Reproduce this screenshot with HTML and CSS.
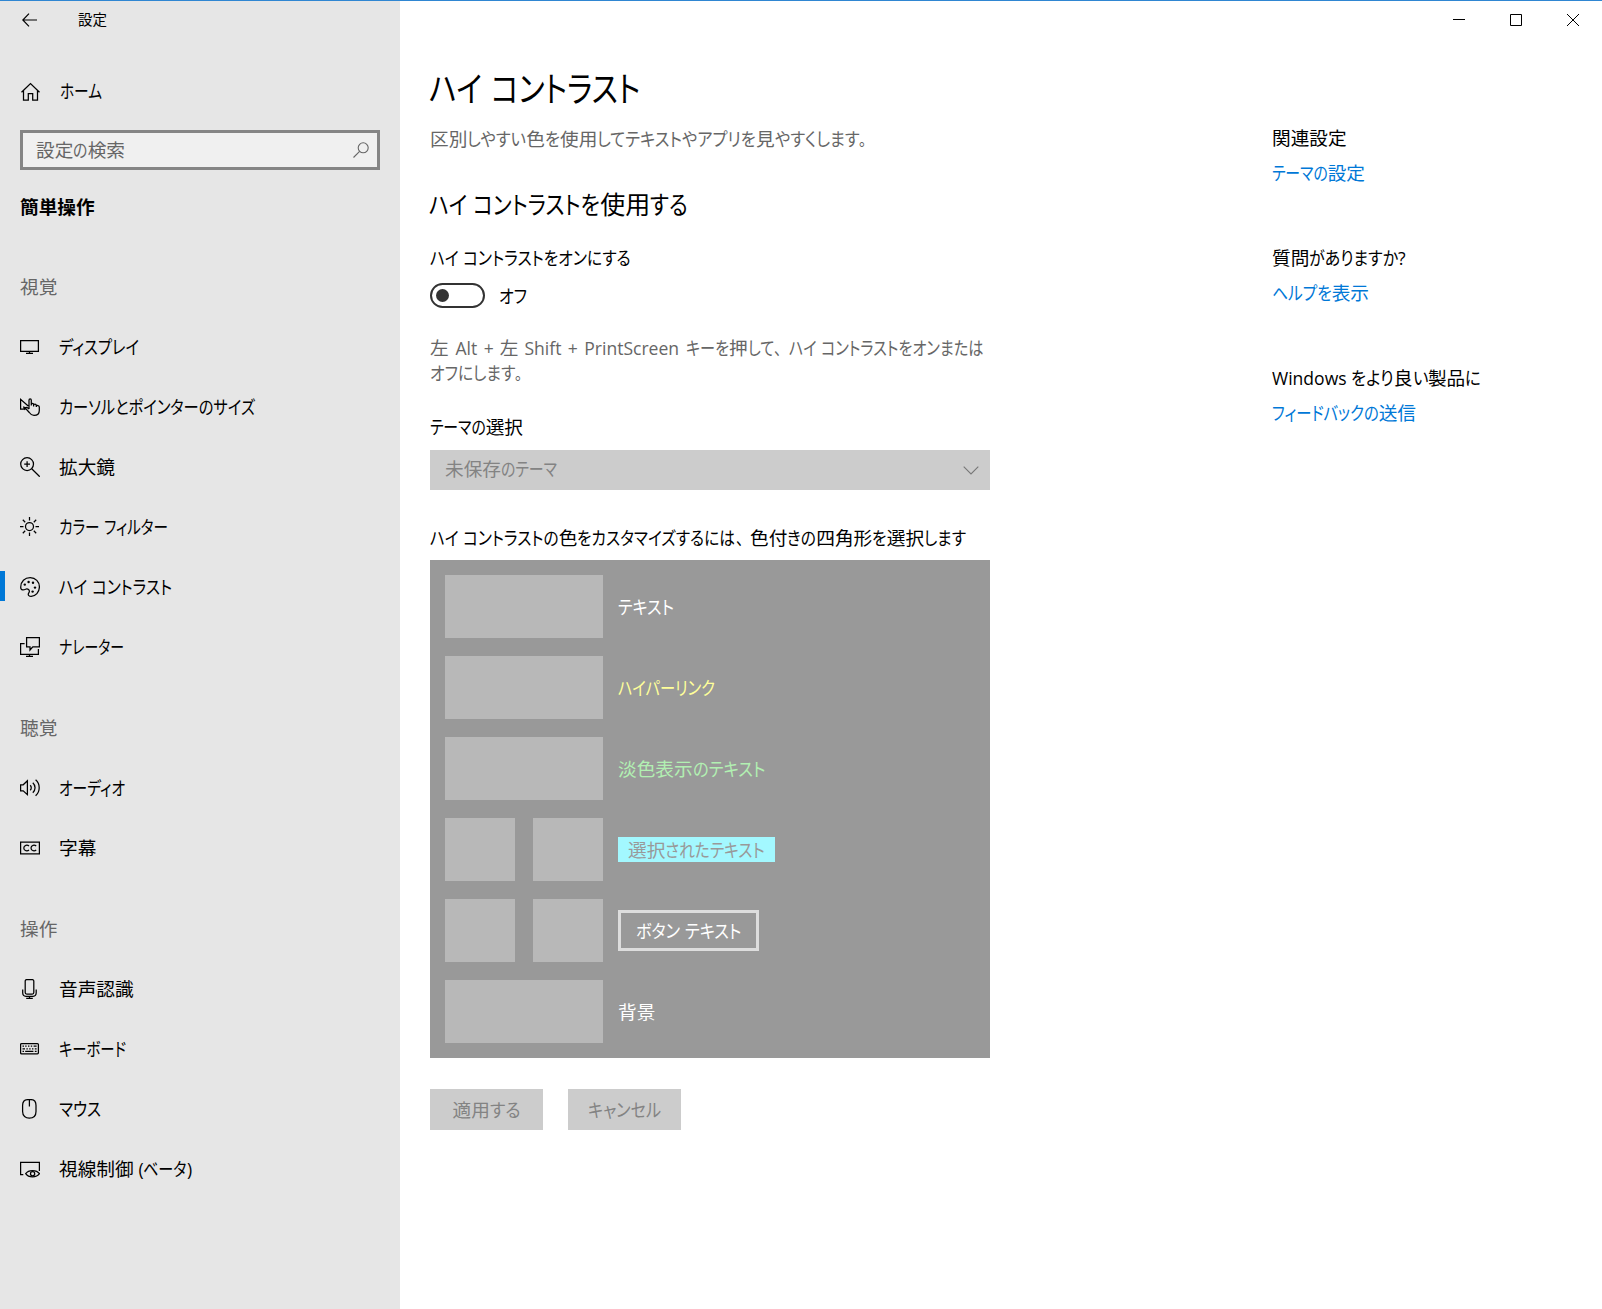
FILE: index.html
```html
<!DOCTYPE html>
<html lang="ja">
<head>
<meta charset="utf-8">
<title>設定</title>
<link rel="stylesheet" href="styles.css">
</head>
<body>
<div class="window">
  <aside class="sidebar">
    <header class="titlebar">
      <svg class="back" viewBox="0 0 16 14"><path d="M.8 7H15M7 .7.8 7 7 13.3"/></svg>
      <span class="apptitle">設定</span>
    </header>
    <a class="home">
      <svg class="icon" viewBox="0 0 20 20"><path d="M1.5 10.2 10.5 1.5 19.5 10.2M3.5 8.5V18H8.3V11.5H12.7V18H17.5V8.5"/></svg>
      <span data-w="42">ホーム</span>
    </a>
    <div class="search">
      <span data-w="89">設定の検索</span>
      <svg viewBox="0 0 16 16"><circle cx="10.2" cy="5.8" r="5"/><path d="M6.6 9.4.5 15.5"/></svg>
    </div>
    <h2 class="category">簡単操作</h2>
    <nav>
      <h3>視覚</h3>
      <a><svg class="icon" viewBox="0 0 20 20"><path d="M.6 3.6H18.4V14.4H.6ZM9.5 14.4V16.4M6 16.4H13"/></svg><span data-w="80">ディスプレイ</span></a>
      <a><svg class="icon" viewBox="0 0 20 20"><path d="M5.3 10.2 3.5 12.2 .6 12.2V2.4L8.2 9M3.5 9.5 5 13M9 12V3.3C9 1.3 11.3 1.3 11.3 3.3V8.5M11.3 7.5C11.3 6 13.6 6 13.6 7.7V9.5M13.6 8.3C13.6 6.8 16.3 6.8 16.3 8.7V10M16.3 9.2C16.8 8 19.3 8.3 19.3 10V13.5C19.3 17 16.5 18.4 14 18.4C11.5 18.4 10.3 17 9.3 15.5L5.8 11.7C5.3 10.8 6.5 9.9 7.5 10.7L9 12"/></svg><span data-w="196">カーソルとポインターのサイズ</span></a>
      <a><svg class="icon" viewBox="0 0 20 20"><circle cx="7.1" cy="7.1" r="6.4"/><path d="M11.7 11.7 19.7 19.7M7.1 4.2V10M4.2 7.1H10"/></svg><span>拡大鏡</span></a>
      <a><svg class="icon" viewBox="0 0 20 20"><circle cx="9.5" cy="9.5" r="4"/><path d="M9.5 0V3.5M9.5 15.5V19M0 9.5H3.5M15.5 9.5H19M2.8 2.8 5.2 5.2M13.8 13.8 16.2 16.2M16.2 2.8 13.8 5.2M5.2 13.8 2.8 16.2"/></svg><span data-w="109">カラー フィルター</span></a>
      <a class="selected"><svg class="icon" viewBox="0 0 20 20"><path d="M.7 10.2C.7 4.5 4.8.7 10.2.7S19.4 4.8 19.4 10 15.5 19.3 11.2 19.3C9 19.3 8 18.3 8.3 16.8C8.5 15.8 9.8 15.2 9.3 13.6C8.9 12.2 7 11.6 5.6 12.2C4.2 12.8.7 13.8.7 10.2Z"/><g class="dots"><circle cx="4.8" cy="7.6" r="1.2"/><circle cx="8.6" cy="5" r="1.2"/><circle cx="13" cy="5.8" r="1.2"/><circle cx="15" cy="10.6" r="1.2"/><circle cx="12.6" cy="14.6" r="1.2"/></g></svg><span data-w="113">ハイ コントラスト</span></a>
      <a><svg class="icon" viewBox="0 0 20 20"><path d="M6.6.6H19.4V9.8H12.8L10 13V9.8H6.6ZM4.6 6.6H.6V17.4H18.4V12M9.5 17.4V19.4M6 19.4H13"/></svg><span data-w="65">ナレーター</span></a>
      <h3>聴覚</h3>
      <a><svg class="icon" viewBox="0 0 20 20"><path d="M.6 6.8H3.2L7.4 2.8V16.6L3.2 12.8H.6ZM10.2 7.2C11.6 8.5 11.6 11 10.2 12.3M12.8 4.8C15.8 7.6 15.8 12 12.8 14.8M15.6 1.8C20.4 6 20.4 13.2 15.6 17.8"/></svg><span data-w="66">オーディオ</span></a>
      <a><svg class="icon" viewBox="0 0 20 20"><path d="M.6 4.2H19.4V15.8H.6ZM9 8C7.5 6.6 3.8 6.8 3.8 10S7.5 13.3 9 12M16.2 8C14.7 6.6 11 6.8 11 10S14.7 13.3 16.2 12"/></svg><span>字幕</span></a>
      <h3>操作</h3>
      <a><svg class="icon" viewBox="0 0 20 20"><rect x="5.2" y=".6" width="8.6" height="14.4" rx="1.5"/><path d="M2.7 10.5V13.8C2.7 15.8 4 17.3 6 17.3H13C15 17.3 16.2 15.8 16.2 13.8V10.5M9.5 17.3V19.4M6.2 19.4H12.8"/></svg><span>音声認識</span></a>
      <a><svg class="icon" viewBox="0 0 20 20"><rect x=".6" y="4.6" width="17.8" height="10.2" rx="1"/><path d="M2.5 7.2H4M5.2 7.2H6.6M8 7.2H9.4M10.8 7.2H12.2M13.6 7.2H16.6M2.5 9.8H5M6.4 9.8H7.8M9.2 9.8H10.6M12 9.8H13.4M14.8 9.8H16.6M2.5 12.3H4M5.2 12.3H13.4M14.8 12.3H16.6"/></svg><span data-w="67">キーボード</span></a>
      <a><svg class="icon" viewBox="0 0 20 20"><path d="M2.6 6.5C2.6 2.5 4.8.6 8 .6H11C14.2.6 16 2.5 16 6.5V12.5C16 17 13 19.2 9.3 19.2S2.6 17 2.6 12.5ZM9.4.6V7.5"/></svg><span data-w="42">マウス</span></a>
      <a><svg class="icon" viewBox="0 0 20 20"><path d="M3.3 15.6H.6V3.4H19.4V12M5.7 14.7C8.5 10.5 16.5 10.5 19.5 14.7C16.5 19 8.5 19 5.7 14.7Z"/><circle cx="12.6" cy="14.7" r="2.1"/></svg><span data-w="133">視線制御 (ベータ)</span></a>
    </nav>
  </aside>

  <main class="content">
    <h1 data-w="211">ハイ コントラスト</h1>
    <p class="lead muted" data-w="444">区別しやすい色を使用してテキストやアプリを見やすくします。</p>
    <h2 data-w="259">ハイ コントラストを使用する</h2>
    <p class="toggle-label" data-w="201">ハイ コントラストをオンにする</p>
    <div class="toggle-row">
      <span class="toggle"><i></i></span>
      <span data-w="28">オフ</span>
    </div>
    <div class="hint muted">
      <p data-w="553">左 Alt + 左 Shift + PrintScreen キーを押して、ハイ コントラストをオンまたは</p>
      <p data-w="100">オフにします。</p>
    </div>
    <p class="field-label" data-w="93">テーマの選択</p>
    <div class="select">
      <span data-w="112">未保存のテーマ</span>
      <svg viewBox="0 0 16 9"><path d="M.7.7 8 8 15.3.7"/></svg>
    </div>
    <p class="panel-label" data-w="536">ハイ コントラストの色をカスタマイズするには、色付きの四角形を選択します</p>
    <section class="panel">
      <div class="row"><div class="swatches"><b></b></div><span class="white" data-w="56">テキスト</span></div>
      <div class="row"><div class="swatches"><b></b></div><span class="yellow" data-w="97">ハイパーリンク</span></div>
      <div class="row"><div class="swatches"><b></b></div><span class="green" data-w="147">淡色表示のテキスト</span></div>
      <div class="row"><div class="swatches"><b></b><b></b></div><div class="marked"><span data-w="137">選択されたテキスト</span></div></div>
      <div class="row"><div class="swatches"><b></b><b></b></div><div class="sample-button"><span data-w="105">ボタン テキスト</span></div></div>
      <div class="row"><div class="swatches"><b></b></div><span class="white">背景</span></div>
    </section>
    <div class="actions">
      <div class="button"><span data-w="68">適用する</span></div>
      <div class="button"><span data-w="73">キャンセル</span></div>
    </div>
  </main>

  <aside class="related">
    <div class="controls">
      <svg viewBox="0 0 12 12"><path d="M0 5.5H12"/></svg>
      <svg viewBox="0 0 12 12"><path d="M.5.5H11.5V11.5H.5Z"/></svg>
      <svg viewBox="0 0 12 12"><path d="M0 0 12 12M12 0 0 12"/></svg>
    </div>
    <div class="links">
      <div><p>関連設定</p><a data-w="93">テーマの設定</a></div>
      <div><p data-w="134">質問がありますか?</p><a data-w="97">ヘルプを表示</a></div>
      <div><p data-w="209">Windows をより良い製品に</p><a data-w="144">フィードバックの送信</a></div>
    </div>
  </aside>
</div>
<script src="kana.js"></script>
</body>
</html>
```
FILE: styles.css
```css
* { box-sizing: border-box; }
body {
  margin: 0;
  background: #fff;
  color: #000;
  font: 400 18.67px/24px "Open Sans", "Noto Sans CJK JP", sans-serif;
}
h1, h2, h3, p { margin: 0; font-weight: 400; font-size: inherit; }
svg { display: block; flex: none; fill: none; stroke: #000; }
[data-w], .run { white-space: pre; }
.run { display: inline-block; transform-origin: 0 50%; }
.kana { font-feature-settings: "palt"; }
.window {
  display: flex;
  height: 1309px;
  border-top: 1px solid #2f86d2;
  overflow: hidden;
}

.sidebar { width: 400px; background: #e6e6e6; flex: none; }
.titlebar { display: flex; align-items: center; height: 39px; padding-left: 22px; }
.back { width: 16px; height: 14px; stroke-width: 1.2; margin-top: -2px; }
.apptitle { font-size: 14.5px; margin: -1px 0 0 40px; }
.icon { width: 20px; height: 20px; stroke-width: 1.25; }
.dots { fill: #000; stroke: none; }
.home { display: flex; align-items: center; gap: 20px; height: 60px; margin-top: 20px; padding: 2px 0 0 20px; }
.home .icon { margin-top: 2px; }
.search {
  display: flex; align-items: center; justify-content: space-between;
  width: 360px; height: 40px; margin: 10px 0 0 20px; padding: 0 8px 0 13px;
  border: 3px solid #858585; background: #f0f0f0; color: #666;
}
.search svg { width: 16px; height: 16px; stroke: #666; stroke-width: 1.1; }
.category { font-weight: 700; margin: 25px 0 0 20px; height: 40px; }
nav h3 { height: 81px; padding: 40px 0 0 20px; color: #666; }
nav a { display: flex; align-items: center; gap: 19px; height: 60px; padding: 2px 0 0 20px; }
nav a.selected {
  background: linear-gradient(#0078d7, #0078d7) 0 15px / 5px 30px no-repeat;
}

.content { width: 590px; padding: 62px 0 0 30px; flex: none; }
.muted { color: #666; }
h1 { font-size: 35px; line-height: 52px; text-indent: 0; margin-left: -1px; }
.lead { margin-top: 12px; }
.content h2 { font-size: 25px; line-height: 36px; margin: 35px 0 0 -1px; }
.toggle-label { margin-top: 24px; }
.toggle-row { display: flex; align-items: center; gap: 14px; margin-top: 13px; height: 25px; }
.toggle { width: 55px; height: 25px; border: 2.5px solid #333; border-radius: 13px; display: flex; align-items: center; padding-left: 4px; }
.toggle i { width: 13px; height: 13px; border-radius: 50%; background: #333; }
.hint { margin-top: 27px; line-height: 25px; }
.field-label { margin-top: 30px; }
.select {
  display: flex; align-items: center; justify-content: space-between;
  height: 40px; margin-top: 11px; padding: 0 11px 0 15px; background: #ccc; color: #838383;
}
.select span[data-w] { margin-top: -2px; }
.select svg { width: 16px; height: 9px; stroke: #777; stroke-width: 1.1; }
.panel-label { margin-top: 36px; }
.panel { display: grid; gap: 18px; margin-top: 10px; padding: 15px; background: #999; }
.row { display: flex; align-items: center; gap: 15px; height: 63px; }
.swatches { display: flex; gap: 18px; width: 158px; height: 63px; }
.swatches b { flex: 1; background: #b8b8b8; }
.white { color: #fff; }
.yellow { color: #ffff99; }
.green { color: #b2f0b2; }
.marked { width: 157px; height: 25px; padding: 1px 0 0 10px; background: #a3f8ff; color: #999; }
.sample-button {
  display: flex; align-items: center; justify-content: center;
  width: 141px; height: 41px; border: 3px solid #ddd; color: #fff;
}
.actions { display: flex; gap: 25px; margin-top: 31px; }
.button {
  display: flex; align-items: center; justify-content: center;
  width: 113px; height: 41px; background: #ccc; color: #838383;
}

.related { flex: 1; padding-right: 23px; }
.controls { display: flex; justify-content: flex-end; gap: 45px; padding-top: 13px; }
.controls svg { width: 12px; height: 12px; stroke-width: 1; }
.links { display: grid; gap: 61px; padding: 100px 0 0 282px; }
.links div { height: 59px; }
.links a { display: block; margin-top: 11px; color: #0078d7; }
```
FILE: kana.js
```js
// Sets kana in condensed form beside full-width kanji, so each label fills its data-w width.
const TYPES = [
  ['punct', /^[\u3001\u3002]/, 0.78],
  ['kana', /^[\u3041-\u30ff]/, null],
  ['latin', /^[\u0020-\u007e]/, 0.94],
  ['kanji', /^/, 1],
];
for (const el of document.querySelectorAll('[data-w]')) {
  const parts = el.textContent.match(/[\u3001\u3002]+|[\u3041-\u30ff]+|[\u0020-\u007e]+|[\u4e00-\u9fff]+/g);
  el.textContent = '';
  let fixed = 0, kana = 0;
  const runs = parts.map(text => {
    const [type, , scale] = TYPES.find(([, pattern]) => pattern.test(text));
    const span = document.createElement('span');
    span.className = `run ${type}`;
    span.textContent = text;
    if (text.includes('+')) span.style.wordSpacing = '2px';
    el.append(span);
    return { span, scale };
  });
  for (const run of runs) {
    run.width = run.span.getBoundingClientRect().width;
    if (run.scale === null) kana += run.width;
    else fixed += run.width * run.scale;
  }
  const fit = (Number(el.dataset.w) - fixed) / kana;
  for (const run of runs) {
    const scale = run.scale ?? fit;
    run.span.style.transform = `scaleX(${scale})`;
    run.span.style.marginRight = `${run.width * (scale - 1)}px`;
  }
}
```
